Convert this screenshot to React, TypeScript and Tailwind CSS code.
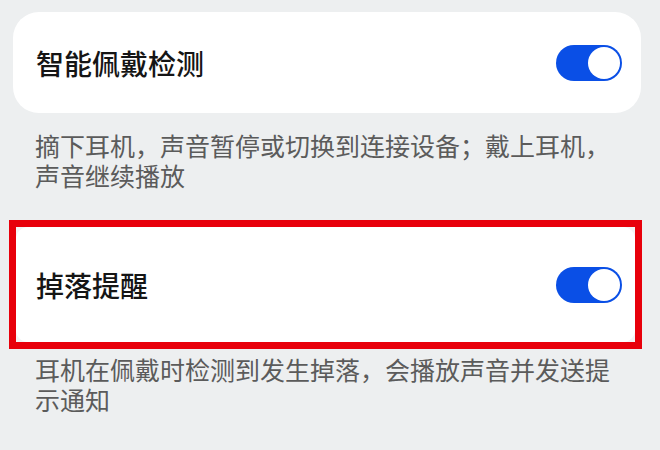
import React from "react";

function Toggle() {
  return (
    <div className="relative h-[36px] w-[66px] shrink-0 rounded-full bg-[#0a4fe6]">
      <div className="absolute right-[2px] top-[2px] h-[32px] w-[32px] rounded-full bg-white" />
    </div>
  );
}

export default function App() {
  return (
    <div
      className="h-[450px] w-[660px] overflow-hidden bg-[#edeff0] pt-[12px]"
      style={{ fontFamily: '"Noto Sans CJK SC", "Noto Sans", sans-serif' }}
    >
      <div className="ml-[13px] flex h-[101px] w-[628px] items-center justify-between rounded-[26px] bg-white pl-[23px] pr-[19px]">
        <span className="text-[28px] font-medium leading-[34px] text-[#151515]">智能佩戴检测</span>
        <Toggle />
      </div>
      <p className="ml-[35px] mt-[17px] w-[595px] text-[25px] leading-[30px] text-[#5b5b5b]">
        摘下耳机，声音暂停或切换到连接设备；戴上耳机，声音继续播放
      </p>
      <div className="ml-[9px] mt-[30px] h-[129px] w-[633px] border-[7px] border-[#e8000b] bg-[#f3f4f5]">
        <div className="flex h-full w-full items-center justify-between rounded-[12px] bg-white pl-[20px] pr-[13px]">
          <span className="text-[28px] font-medium leading-[34px] text-[#151515]">掉落提醒</span>
          <Toggle />
        </div>
      </div>
      <p className="ml-[35px] mt-[5px] w-[595px] text-[25px] leading-[30px] text-[#5b5b5b]">
        耳机在佩戴时检测到发生掉落，会播放声音并发送提示通知
      </p>
    </div>
  );
}
